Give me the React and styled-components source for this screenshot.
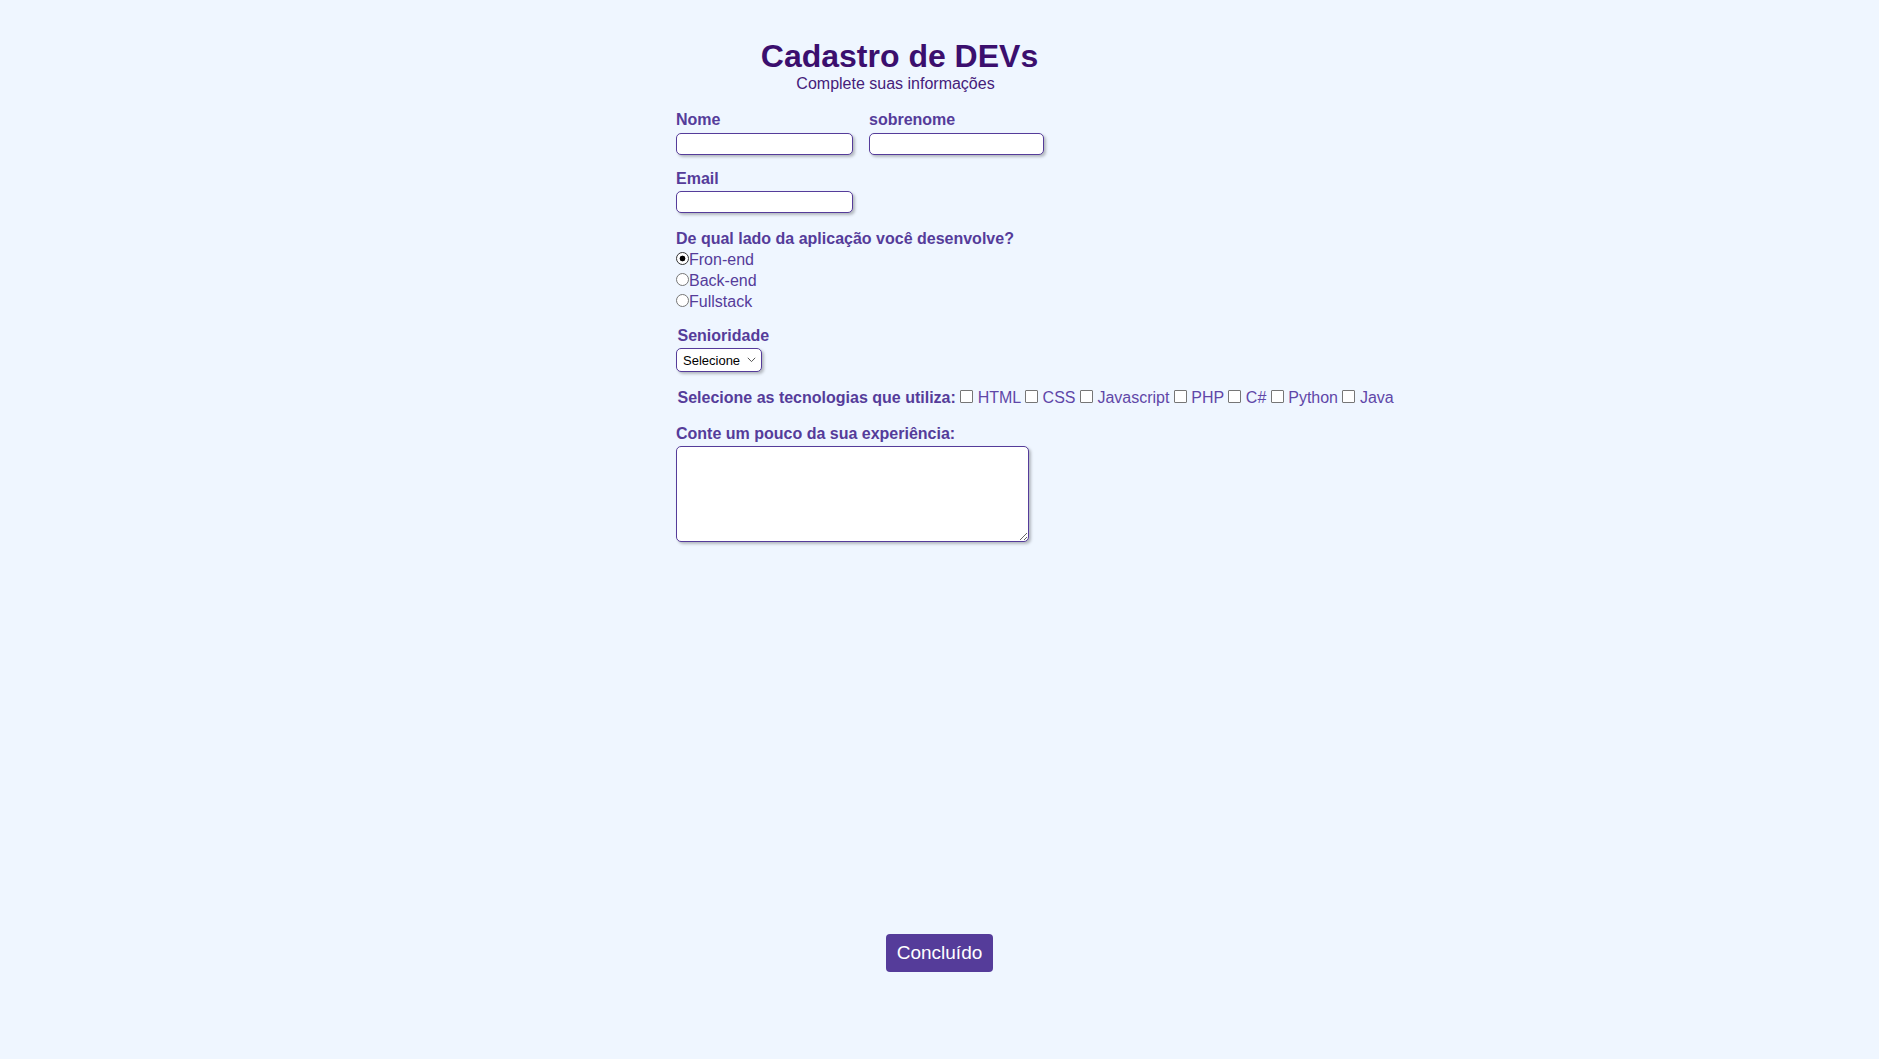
import React from 'react';
import styled, { createGlobalStyle } from 'styled-components';

const GlobalStyle = createGlobalStyle`
  html, body { margin: 0; padding: 0; background: #eff6ff; }
  body { font-family: "Liberation Sans", Arial, sans-serif; }
  * { box-sizing: border-box; }
`;

const Page = styled.div`
  min-height: 100vh;
  display: flex;
  flex-direction: column;
  align-items: center;
  padding-top: 38px;
  background: #eff6ff;
`;

const Form = styled.form`
  width: 527px;
  display: flex;
  flex-direction: column;
  align-items: flex-start;
`;

const Header = styled.header`
  width: 447px;
  text-align: center;
`;

const Title = styled.h1`
  margin: 0;
  font-size: 32px;
  line-height: 37px;
  font-weight: 700;
  color: #3b0f6e;
`;

const Subtitle = styled.p`
  margin: 0;
  padding-right: 8px;
  font-size: 16px;
  line-height: 18px;
  color: #45207a;
`;

const FieldRow = styled.div`
  display: flex;
  gap: 16px;
  margin-top: ${(p) => p.$mt}px;
`;

const Group = styled.div`
  display: flex;
  flex-direction: column;
  align-items: flex-start;
  margin-top: ${(p) => p.$mt || 0}px;
`;

const Label = styled.label`
  display: block;
  font-size: 16px;
  line-height: 18px;
  font-weight: 700;
  color: #553c9a;
  padding-left: ${(p) => (p.$indent ? 1.5 : 0)}px;
`;

const TextInput = styled.input`
  margin: ${(p) => p.$gap}px 0 0 0;
  width: ${(p) => p.$w}px;
  height: 22px;
  padding: 1px 4px;
  border: 1px solid #553c9a;
  border-radius: 5px;
  background: #fff;
  box-shadow: 2px 2px 3px rgba(0, 0, 0, 0.25);
  font: 13px "Liberation Sans", Arial, sans-serif;
  outline: none;
`;

const RadioList = styled.div`
  margin-top: 1px;
`;

const Option = styled.label`
  display: block;
  font-size: 16px;
  line-height: 21px;
  color: #553c9a;
`;

const Radio = styled.input.attrs({ type: 'radio' })`
  appearance: none;
  margin: 0;
  width: 13px;
  height: 13px;
  border: 1px solid #767676;
  border-radius: 50%;
  background: #fff;
  vertical-align: baseline;

  &:checked {
    border-color: #333;
    background: radial-gradient(circle, #000 0 2.6px, #fff 3.2px);
  }
`;

const SelectWrap = styled.div`
  position: relative;
  margin-top: 3px;
  width: 86px;
  height: 24px;
`;

const Select = styled.select`
  appearance: none;
  display: block;
  width: 100%;
  height: 100%;
  margin: 0;
  padding: 0 18px 0 6px;
  border: 1px solid #553c9a;
  border-radius: 5px;
  background: #fff;
  box-shadow: 2px 2px 3px rgba(0, 0, 0, 0.25);
  font: 13px "Liberation Sans", Arial, sans-serif;
  color: #000;
  outline: none;
`;

const Chevron = styled.svg`
  position: absolute;
  right: 6px;
  top: 9px;
  width: 9px;
  height: 6px;
  pointer-events: none;
`;

const TechRow = styled.div`
  margin-top: 17px;
  padding-left: 1.5px;
  white-space: nowrap;
  font-size: 16px;
  line-height: 18px;
  color: #5f47a8;
`;

const TechTitle = styled.span`
  font-weight: 700;
  color: #553c9a;
`;

const Check = styled.input.attrs({ type: 'checkbox' })`
  appearance: none;
  margin: 0;
  width: 13px;
  height: 13px;
  border: 1px solid #767676;
  border-radius: 1px;
  background: #fff;
  vertical-align: baseline;
`;

const TextArea = styled.textarea`
  margin-top: 3px;
  width: 353px;
  height: 96px;
  border: 1px solid #553c9a;
  border-radius: 5px;
  background: #fff;
  box-shadow: 2px 2px 3px rgba(0, 0, 0, 0.25);
  font: 13px "Liberation Mono", monospace;
  outline: none;
`;

const SubmitButton = styled.button`
  align-self: center;
  margin-top: 392px;
  padding: 8px 11px;
  border: none;
  border-radius: 4px;
  background: #553c9a;
  color: #fff;
  font: 19px/22px "Liberation Sans", Arial, sans-serif;
  cursor: pointer;
`;

const techs = ['HTML', 'CSS', 'Javascript', 'PHP', 'C#', 'Python', 'Java'];
const sides = ['Fron-end', 'Back-end', 'Fullstack'];

export default function App() {
  return (
    <>
      <GlobalStyle />
      <Page>
        <Form onSubmit={(e) => e.preventDefault()}>
          <Header>
            <Title>Cadastro de DEVs</Title>
            <Subtitle>Complete suas informações</Subtitle>
          </Header>

          <FieldRow $mt={18}>
            <Group>
              <Label htmlFor="nome">Nome</Label>
              <TextInput id="nome" $w={177} $gap={4} />
            </Group>
            <Group>
              <Label htmlFor="sobrenome">sobrenome</Label>
              <TextInput id="sobrenome" $w={175} $gap={4} />
            </Group>
          </FieldRow>

          <Group $mt={15}>
            <Label htmlFor="email">Email</Label>
            <TextInput id="email" $w={177} $gap={3} />
          </Group>

          <Group $mt={17}>
            <Label>De qual lado da aplicação você desenvolve?</Label>
            <RadioList>
              {sides.map((s, i) => (
                <Option key={s}>
                  <Radio name="lado" defaultChecked={i === 0} />
                  {s}
                </Option>
              ))}
            </RadioList>
          </Group>

          <Group $mt={15}>
            <Label htmlFor="senioridade" $indent>Senioridade</Label>
            <SelectWrap>
              <Select id="senioridade" defaultValue="">
                <option value="">Selecione</option>
                <option value="jr">Júnior</option>
                <option value="pl">Pleno</option>
                <option value="sr">Sênior</option>
              </Select>
              <Chevron viewBox="0 0 9 6" fill="none">
                <path d="M0.8 0.8 L4.5 4.6 L8.2 0.8" stroke="#555" strokeWidth="1" />
              </Chevron>
            </SelectWrap>
          </Group>

          <TechRow>
            <TechTitle>Selecione as tecnologias que utiliza:</TechTitle>
            {techs.map((t) => (
              <React.Fragment key={t}>
                {' '}
                <Check /> {t}
              </React.Fragment>
            ))}
          </TechRow>

          <Group $mt={18}>
            <Label htmlFor="exp">Conte um pouco da sua experiência:</Label>
            <TextArea id="exp" />
          </Group>

          <SubmitButton type="submit">Concluído</SubmitButton>
        </Form>
      </Page>
    </>
  );
}
